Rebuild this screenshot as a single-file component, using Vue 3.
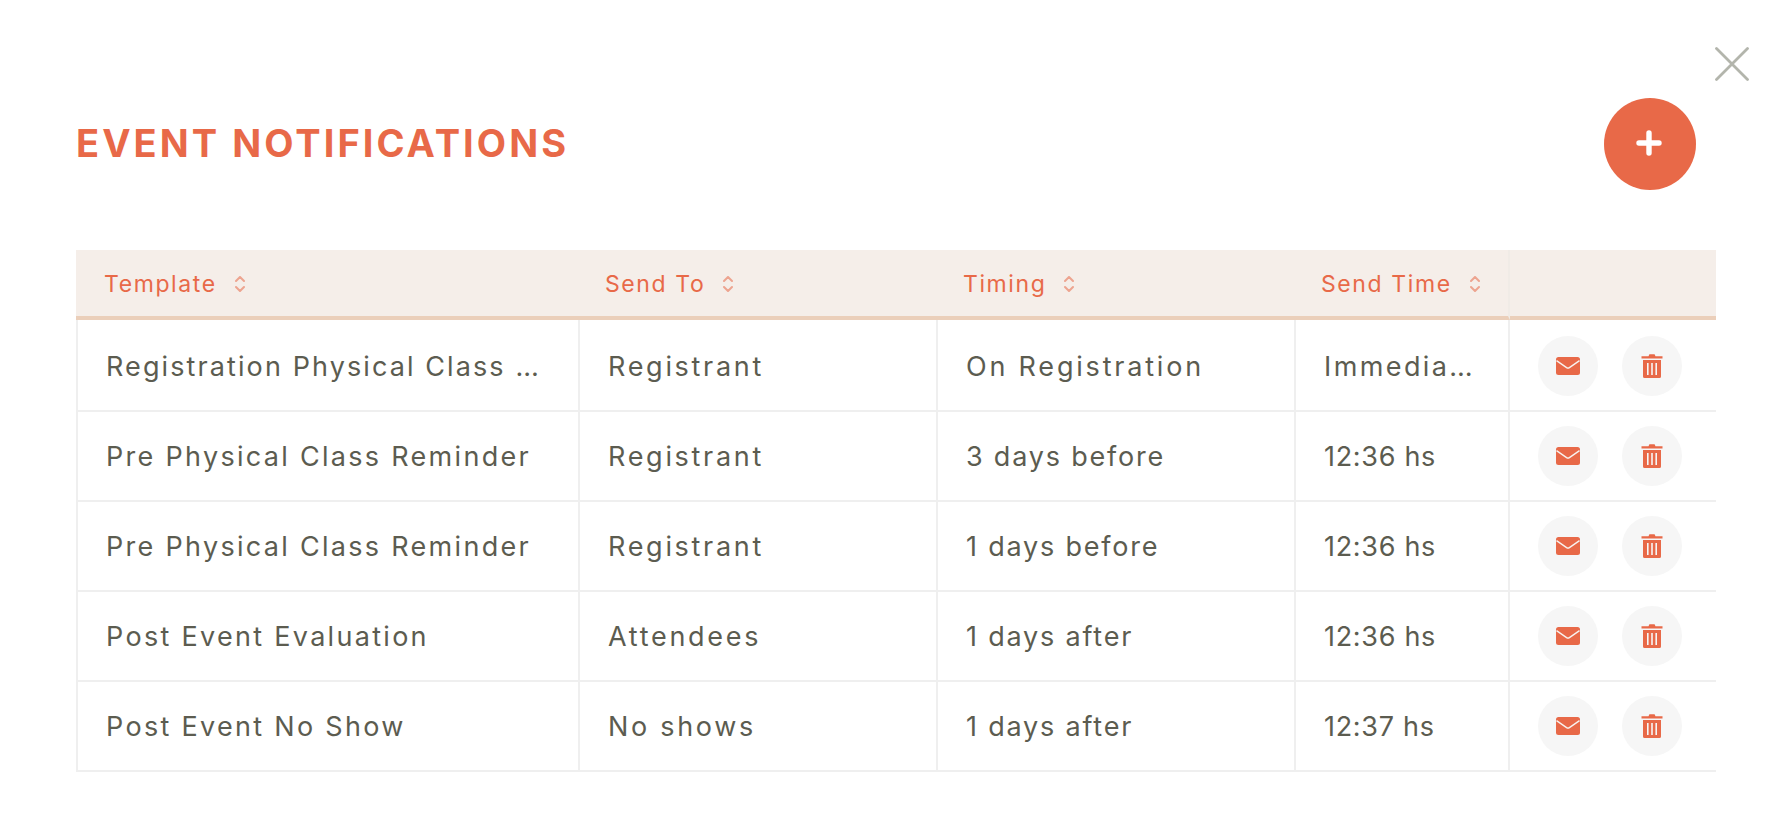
<script setup>
import { ref } from 'vue'

const columns = ref(['Template', 'Send To', 'Timing', 'Send Time'])

const rows = ref([
  { id: 1, template: 'Registration Physical Class Confirmation', sendTo: 'Registrant', timing: 'On Registration', time: 'Immediately', wordy: true },
  { id: 2, template: 'Pre Physical Class Reminder', sendTo: 'Registrant', timing: '3 days before', time: '12:36 hs' },
  { id: 3, template: 'Pre Physical Class Reminder', sendTo: 'Registrant', timing: '1 days before', time: '12:36 hs' },
  { id: 4, template: 'Post Event Evaluation', sendTo: 'Attendees', timing: '1 days after', time: '12:36 hs' },
  { id: 5, template: 'Post Event No Show', sendTo: 'No shows', timing: '1 days after', time: '12:37 hs' },
])
</script>

<template>
  <div class="modal">
    <button class="close" aria-label="Close">
      <svg width="34" height="34" viewBox="0 0 34 34">
        <path d="M1.5 1.5 L32.5 32.5 M32.5 1.5 L1.5 32.5" stroke="#b3b5ac" stroke-width="2.8" stroke-linecap="round" />
      </svg>
    </button>

    <div class="head">
      <h1 class="title">EVENT NOTIFICATIONS</h1>
      <button class="add" aria-label="Add">
        <svg width="26" height="26" viewBox="0 0 26 26">
          <path d="M13 3 V23 M3 13 H23" stroke="#fff" stroke-width="5.4" stroke-linecap="round" />
        </svg>
      </button>
    </div>

    <table class="grid">
      <colgroup>
        <col class="c1" /><col class="c2" /><col class="c3" /><col class="c4" /><col />
      </colgroup>
      <thead>
        <tr>
          <th v-for="col in columns" :key="col">
            <span class="th-inner">
              {{ col }}
              <svg class="sort" width="10" height="20" viewBox="0 0 10 20">
                <path d="M1 7 L5 3 L9 7 M1 13 L5 17 L9 13" fill="none" stroke="#e86948" stroke-width="2" stroke-linecap="round" stroke-linejoin="round" />
              </svg>
            </span>
          </th>
          <th></th>
        </tr>
      </thead>
      <tbody>
        <tr v-for="row in rows" :key="row.id">
          <td class="t-template" :class="{ wordy: row.wordy }"><div class="cell">{{ row.template }}</div></td>
          <td class="t-send"><div class="cell">{{ row.sendTo }}</div></td>
          <td class="t-timing" :class="{ wordy: row.wordy }"><div class="cell">{{ row.timing }}</div></td>
          <td class="t-time" :class="{ wordy: row.wordy }"><div class="cell">{{ row.time }}</div></td>
          <td class="actions">
            <div class="action-wrap">
              <button class="round" aria-label="Send">
                <svg width="26" height="20" viewBox="0 0 26 20">
                  <rect x="1" y="1" width="24" height="18" rx="2.5" fill="#e86948" />
                  <path d="M1.5 4.6 L11.6 11.6 Q13 12.5 14.4 11.6 L24.5 4.6" fill="none" stroke="#f8f3f0" stroke-width="1.4" />
                </svg>
              </button>
              <button class="round" aria-label="Delete">
                <svg width="22" height="26" viewBox="0 0 22 26">
                  <path d="M0.5 3.2 H7.5 L8.4 1.2 H13.6 L14.5 3.2 H21.5 V5.4 H0.5 Z" fill="#e86948" />
                  <path fill-rule="evenodd" d="M2 7 H20 V23.5 Q20 25 18.5 25 H3.5 Q2 25 2 23.5 Z M6 10 V22 H7.6 V10 Z M10.2 10 V22 H11.8 V10 Z M14.4 10 V22 H16 V10 Z" fill="#e86948" />
                </svg>
              </button>
            </div>
          </td>
        </tr>
      </tbody>
    </table>
  </div>
</template>

<style scoped>
.modal {
  position: relative;
  width: 1788px;
  height: 818px;
  box-sizing: border-box;
  padding: 98px 72px 0 76px;
  background: #fff;
  font-family: Inter, "Open Sans", sans-serif;
  overflow: hidden;
}

button {
  border: 0;
  padding: 0;
  cursor: pointer;
}

.close {
  position: absolute;
  top: 47px;
  left: 1715px;
  width: 34px;
  height: 34px;
  background: none;
}

.head {
  display: flex;
  align-items: center;
  justify-content: space-between;
  padding-right: 20px;
  margin-bottom: 60px;
}

.title {
  margin: 0 0 2px;
  font-size: 38px;
  font-weight: 700;
  letter-spacing: 3.05px;
  color: #e86948;
}

.add {
  width: 92px;
  height: 92px;
  box-sizing: border-box;
  padding: 0 2px 2px 0;
  border-radius: 50%;
  background: #e86948;
  display: flex;
  align-items: center;
  justify-content: center;
}

.grid {
  width: 1640px;
  table-layout: fixed;
  border-collapse: separate;
  border-spacing: 0;
}

.c1 { width: 504px; }
.c2 { width: 358px; }
.c3 { width: 358px; }
.c4 { width: 214px; }

th {
  height: 64px;
  padding: 2px 0 0 25px;
  background: #f5eee9;
  border-bottom: 4px solid #ebcfba;
  text-align: left;
  font-size: 23px;
  font-weight: 400;
  letter-spacing: 1.6px;
  color: #e86948;
}

th:first-child {
  padding-left: 28px;
}

.th-inner {
  display: inline-flex;
  align-items: center;
  gap: 18px;
}

.sort {
  opacity: 0.55;
}

th:nth-child(4) {
  border-right: 2px solid #f0ebe6;
}

td {
  height: 88px;
  padding: 0 28px;
  border-bottom: 2px solid #efefef;
  border-right: 2px solid #efefef;
  font-size: 27px;
  color: #5c5c50;
}

td:first-child {
  border-left: 2px solid #efefef;
}

tbody tr:first-child td {
  padding-top: 2px;
}

td:last-child {
  border-right: 0;
}

.t-template { letter-spacing: 2.3px; padding-right: 36px; }
.t-template.wordy { letter-spacing: 2.1px; }
.t-send { letter-spacing: 2.7px; }
.t-timing { letter-spacing: 1.8px; }
.t-timing.wordy { letter-spacing: 2.8px; }
.t-time { letter-spacing: 0.7px; }
.t-time.wordy { letter-spacing: 2.4px; }

.cell {
  overflow: hidden;
  white-space: nowrap;
  text-overflow: ellipsis;
}

.actions {
  padding: 0 0 0 28px;
}

.action-wrap {
  display: flex;
  gap: 24px;
}

.round {
  width: 60px;
  height: 60px;
  border-radius: 50%;
  background: #f6f6f6;
  display: flex;
  align-items: center;
  justify-content: center;
}
</style>
